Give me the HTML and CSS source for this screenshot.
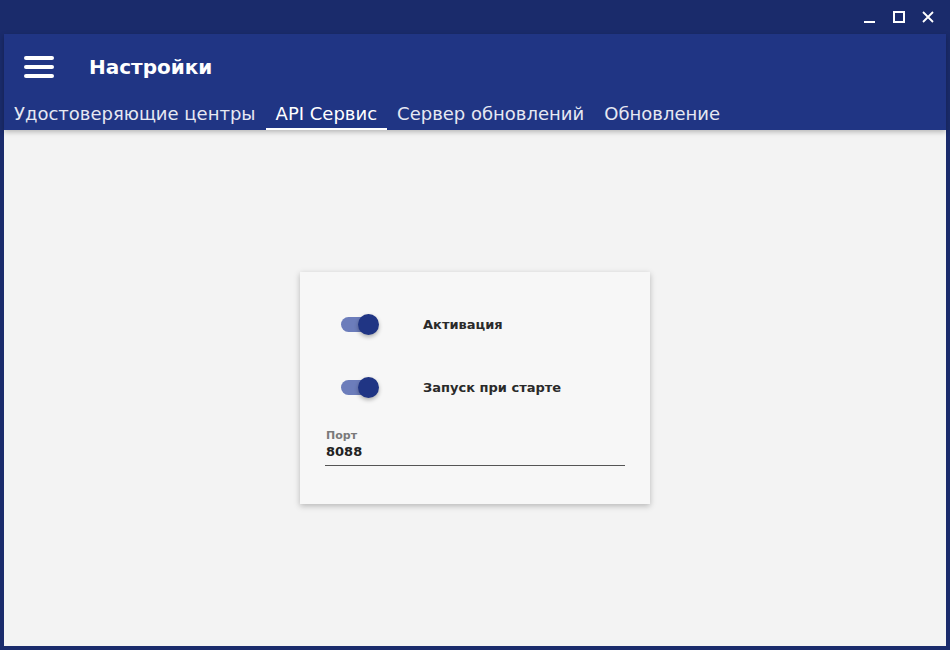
FILE: index.html
```html
<!DOCTYPE html>
<html lang="ru">
<head>
    <meta charset="UTF-8">
    <title>Настройки</title>
    <link rel="stylesheet" href="styles.css">
</head>
<body>
    <div class="window">
        <!-- Title bar -->
        <div class="titlebar">
            <span class="win-btn">
                <svg width="14" height="14" viewBox="0 0 14 14"><rect x="1" y="11" width="11" height="2" fill="#fff"/></svg>
            </span>
            <span class="win-btn">
                <svg width="14" height="14" viewBox="0 0 14 14"><rect x="2" y="2" width="10" height="10" fill="none" stroke="#fff" stroke-width="2"/></svg>
            </span>
            <span class="win-btn">
                <svg width="14" height="14" viewBox="0 0 14 14"><path d="M2 2 L12 12 M12 2 L2 12" stroke="#fff" stroke-width="1.8"/></svg>
            </span>
        </div>

        <div class="app">
            <header class="appbar">
                <div class="toolbar">
                    <span class="menu-icon">
                        <span></span><span></span><span></span>
                    </span>
                    <h1>Настройки</h1>
                </div>
                <nav class="tabs">
                    <a class="tab">Удостоверяющие центры</a>
                    <a class="tab active">API Сервис</a>
                    <a class="tab">Сервер обновлений</a>
                    <a class="tab">Обновление</a>
                </nav>
            </header>

            <main class="content">
                <div class="card">
                    <div class="row">
                        <span class="switch"><span class="knob"></span></span>
                        <span class="row-label">Активация</span>
                    </div>
                    <div class="row">
                        <span class="switch"><span class="knob"></span></span>
                        <span class="row-label">Запуск при старте</span>
                    </div>
                    <div class="field">
                        <label>Порт</label>
                        <div class="field-value">8088</div>
                    </div>
                </div>
            </main>
        </div>
    </div>
</body>
</html>
```

FILE: styles.css
```css
body {
    margin: 0;
    font-family: 'DejaVu Sans', sans-serif;
    background: #1a2b6b;
}

.window {
    width: 950px;
    height: 650px;
    display: flex;
    flex-direction: column;
    background: #1a2b6b;
}

.titlebar {
    height: 34px;
    display: flex;
    justify-content: flex-end;
    align-items: center;
    padding-right: 8px;
    box-sizing: border-box;
}

.win-btn {
    width: 29px;
    height: 20px;
    display: flex;
    align-items: center;
    justify-content: center;
}

.app {
    flex: 1;
    margin: 0 4px 4px 4px;
    display: flex;
    flex-direction: column;
    background: #f3f3f3;
}

.appbar {
    background: #203584;
    color: #fff;
    box-shadow: 0 2px 5px rgba(0, 0, 0, 0.25);
    position: relative;
    z-index: 1;
}

.toolbar {
    height: 65px;
    display: flex;
    align-items: center;
    padding-left: 20px;
}

.menu-icon {
    width: 30px;
    display: flex;
    flex-direction: column;
    gap: 5px;
    margin-right: 36px;
}

.menu-icon span {
    display: block;
    height: 4px;
    border-radius: 2px;
    background: #fff;
}

.toolbar h1 {
    margin: 0 0 0 -1px;
    font-size: 20px;
    font-weight: bold;
}

.tabs {
    display: flex;
    height: 31px;
}

.tab {
    padding: 0 10px;
    font-size: 18px;
    line-height: 29px;
    color: #e6e8f2;
    border-bottom: 2px solid transparent;
    white-space: nowrap;
}

.tab.active {
    color: #fff;
    border-bottom-color: #fff;
}

.content {
    flex: 1;
    display: flex;
    align-items: center;
    justify-content: center;
}

.card {
    width: 350px;
    box-sizing: border-box;
    padding: 32px 25px 38px 25px;
    background: #f7f7f7;
    box-shadow: 0 2px 6px rgba(0, 0, 0, 0.25);
}

.row {
    height: 40px;
    display: flex;
    align-items: center;
    margin-bottom: 23px;
}

.switch {
    position: relative;
    width: 32px;
    height: 15px;
    margin-left: 16px;
    margin-right: 50px;
    border-radius: 8px;
    background: #6c7dbb;
}

.knob {
    position: absolute;
    top: -3px;
    left: 17px;
    width: 21px;
    height: 21px;
    border-radius: 50%;
    background: #203584;
    box-shadow: 0 2px 4px rgba(0, 0, 0, 0.3);
}

.row-label {
    font-size: 13px;
    font-weight: bold;
    color: #2a2a2a;
}

.field {
    margin-top: -1px;
    border-bottom: 1px solid #555;
    padding: 0 1px 6px 1px;
}

.field label {
    display: block;
    font-size: 11px;
    font-weight: bold;
    color: #7a7a7a;
}

.field-value {
    font-size: 13px;
    font-weight: bold;
    color: #222;
    margin-top: 2px;
}
```
